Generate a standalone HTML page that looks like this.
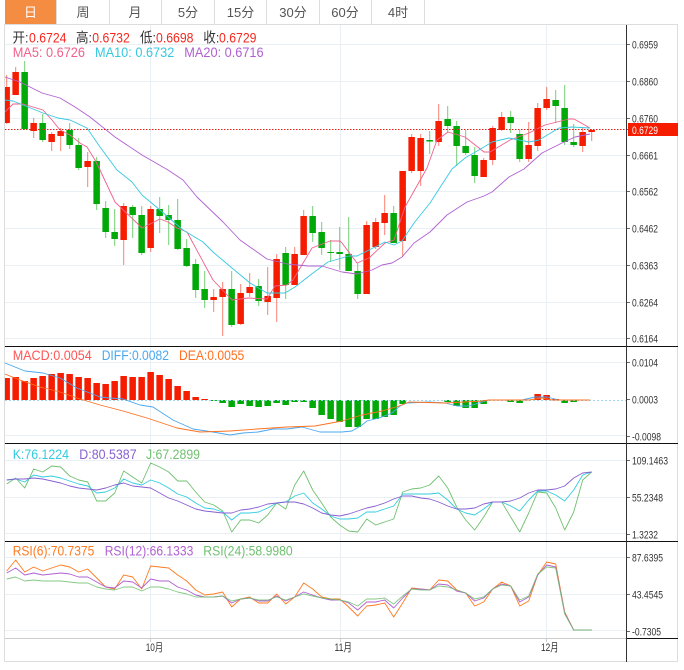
<!DOCTYPE html>
<html><head><meta charset="utf-8"><style>
html,body{margin:0;padding:0;background:#fff;width:684px;height:670px;overflow:hidden}
svg{display:block;font-family:"Liberation Sans","Noto Sans CJK SC",sans-serif}
.g{stroke:#e9eff3;stroke-width:1;fill:none}
.l{fill:none;stroke-width:.9;stroke-linejoin:round}
.a{font-size:11px;fill:#333}
.t{font-size:14px}
.tab{font-size:13px;fill:#555;text-anchor:middle}
</style></head><body>
<svg width="684" height="670" viewBox="0 0 684 670">
<defs><clipPath id="c"><rect x="5" y="25" width="621" height="613"/></clipPath></defs>
<rect x="5" y="0" width="52" height="24" fill="#f48d42"/>
<path d="M56.5 0V24M109.5 0V24M161.5 0V24M214.5 0V24M266.5 0V24M319.5 0V24M371.5 0V24M424.5 0V24" stroke="#ddd" fill="none"/>
<path d="M4 24.5H678M4.5 24V662M677.5 24V662M4 661.5H678" stroke="#ddd" fill="none"/>
<text x="30.5" y="17" class="tab" style="fill:#fff">日</text>
<text x="83" y="17" class="tab">周</text>
<text x="135" y="17" class="tab">月</text>
<text x="188" y="17" class="tab">5分</text>
<text x="240.5" y="17" class="tab">15分</text>
<text x="293" y="17" class="tab">30分</text>
<text x="345" y="17" class="tab">60分</text>
<text x="398" y="17" class="tab">4时</text>

<path class="g" d="M5 44.5H626M5 81.5H626M5 118.5H626M5 155.5H626M5 191.5H626M5 228.5H626M5 265.5H626M5 302.5H626M5 338.5H626M5 362.5H626M5 435.5H626M5 460.5H626M5 497.5H626M5 533.5H626M5 557.5H626M5 594.5H626M5 630.5H626M150.5 25V638M340.5 25V638M546.5 25V638"/>

<g clip-path="url(#c)">
<path stroke="#f51c00" stroke-opacity=".55" fill="none" d="M6.7 75V124M15.7 67V95M33.7 118V138M51.7 132V151M60.7 128V151M87.7 152V187M123.7 203V265M150.7 206V252M213.7 289V312M222.7 282V336M240.7 284V325M249.7 273V297M267.7 267V315M276.7 254V322M294.7 247V285M303.7 210V255M366.7 221V294M375.7 218V249M384.7 195V235M402.7 171V257M411.7 134V173M420.7 134V186M438.7 104V146M483.7 158V177M492.7 126V165M501.7 112V131M528.7 122V162M537.7 103V151M546.7 87V110M582.7 128V152M591.7 129V141"/>
<path stroke="#00a808" stroke-opacity=".55" fill="none" d="M24.7 61V130M42.7 114V142M69.7 123V149M78.7 138V170M96.7 157V210M105.7 201V238M114.7 209V246M132.7 205V238M141.7 206V255M159.7 197V233M168.7 205V245M177.7 199V250M186.7 239V267M195.7 259V298M204.7 271V308M231.7 271V327M258.7 279V306M285.7 247V299M312.7 206V242M321.7 222V255M330.7 240V262M339.7 227V270M348.7 217V271M357.7 263V299M393.7 206V243M429.7 131V154M447.7 106V133M456.7 121V166M465.7 130V155M474.7 147V183M510.7 111V133M519.7 130V162M555.7 90V123M564.7 85V145M573.7 124V147"/>
<path fill="#f51c00" d="M3.4 87h6.5V123h-6.5zM12.4 72h6.5V95h-6.5zM30.4 123h6.5V131h-6.5zM48.4 134h6.5V142h-6.5zM57.4 131h6.5V136h-6.5zM84.4 161h6.5V167h-6.5zM120.4 206h6.5V240h-6.5zM147.4 209h6.5V248h-6.5zM210.4 297h6.5V300h-6.5zM219.4 289h6.5V297h-6.5zM237.4 293h6.5V324h-6.5zM246.4 287h6.5V293h-6.5zM264.4 296h6.5V302h-6.5zM273.4 259h6.5V298h-6.5zM291.4 254h6.5V285h-6.5zM300.4 216h6.5V255h-6.5zM363.4 225h6.5V294h-6.5zM372.4 222h6.5V247h-6.5zM381.4 213h6.5V223h-6.5zM399.4 171h6.5V241h-6.5zM408.4 137h6.5V171h-6.5zM417.4 138h6.5V171h-6.5zM435.4 121h6.5V142h-6.5zM480.4 160h6.5V177h-6.5zM489.4 128h6.5V160h-6.5zM498.4 117h6.5V130h-6.5zM525.4 145h6.5V159h-6.5zM534.4 108h6.5V146h-6.5zM543.4 99h6.5V108h-6.5zM579.4 132h6.5V146h-6.5zM588.4 130h6.5V132h-6.5z"/>
<path fill="#00a808" d="M21.4 72h6.5V129h-6.5zM39.4 123h6.5V140h-6.5zM66.4 130h6.5V145h-6.5zM75.4 145h6.5V168h-6.5zM93.4 161h6.5V204h-6.5zM102.4 208h6.5V232h-6.5zM111.4 232h6.5V239h-6.5zM129.4 207h6.5V215h-6.5zM138.4 215h6.5V253h-6.5zM156.4 209h6.5V216h-6.5zM165.4 215h6.5V220h-6.5zM174.4 220h6.5V249h-6.5zM183.4 248h6.5V266h-6.5zM192.4 264h6.5V290h-6.5zM201.4 289h6.5V300h-6.5zM228.4 289h6.5V325h-6.5zM255.4 286h6.5V301h-6.5zM282.4 253h6.5V285h-6.5zM309.4 216h6.5V233h-6.5zM318.4 232h6.5V248h-6.5zM327.4 252h6.5V253h-6.5zM336.4 252h6.5V254h-6.5zM345.4 254h6.5V271h-6.5zM354.4 271h6.5V294h-6.5zM390.4 213h6.5V243h-6.5zM426.4 140h6.5V141.5h-6.5zM444.4 119h6.5V126h-6.5zM453.4 126h6.5V146h-6.5zM462.4 146h6.5V153h-6.5zM471.4 155h6.5V176h-6.5zM507.4 117h6.5V123h-6.5zM516.4 134h6.5V159h-6.5zM552.4 100h6.5V106h-6.5zM561.4 108h6.5V142h-6.5zM570.4 142h6.5V145h-6.5z"/>

<polyline class="l" stroke="#f0608c" points="5,112 13,104 23,104 33,107 43,110 52,120 60,130 70,135 80,143 87,147 95,160 100,170 115,202 142,228 160,219 168,222 177,228 187,232 213,280 232,300 248,298 267,299 275,286 287,285 293,280 312,248 330,241 340,241 342,243 357,263 369,258 385,243 394,240 405,207 427,168 437,140 448,132 465,137 484,152 490,152 510,140 529,133 545,125 569,119 574,119 590,128"/>
<polyline class="l" stroke="#38c8e0" points="5,100 13,101 23,105 43,113 58,118 70,120 87,128 100,147 117,170 132,182 142,195 160,210 183,230 203,242 213,252 232,268 250,283 267,293 285,293 295,287 313,273 328,262 342,258 349,256 357,256 375,247 385,242 394,245 402,241 414,223 430,203 452,169 465,158 484,147 492,142 509,138 519,140 529,142 539,140 559,128 572,127 590,128"/>
<polyline class="l" stroke="#b060d0" points="5,77 20,82 42,93 60,98 75,107 90,117 115,137 142,155 168,170 183,180 197,197 223,222 240,240 267,259 287,264 308,266 322,266 342,272 357,274 372,270 382,265 392,263 402,257 414,243 430,232 447,215 467,202 484,196 492,192 509,177 524,169 542,153 562,143 575,137 590,134"/>

<path fill="#f51c00" d="M3.4 378h6.5V400h-6.5zM12.4 377h6.5V400h-6.5zM21.4 381h6.5V400h-6.5zM30.4 378h6.5V400h-6.5zM39.4 376h6.5V400h-6.5zM48.4 374h6.5V400h-6.5zM57.4 373h6.5V400h-6.5zM66.4 374h6.5V400h-6.5zM75.4 377h6.5V400h-6.5zM84.4 378h6.5V400h-6.5zM93.4 383h6.5V400h-6.5zM102.4 384h6.5V400h-6.5zM111.4 381h6.5V400h-6.5zM120.4 376h6.5V400h-6.5zM129.4 377h6.5V400h-6.5zM138.4 377h6.5V400h-6.5zM147.4 372h6.5V400h-6.5zM156.4 375h6.5V400h-6.5zM165.4 379h6.5V400h-6.5zM174.4 386h6.5V400h-6.5zM183.4 391h6.5V400h-6.5zM192.4 397h6.5V400h-6.5zM201.4 399h6.5V400h-6.5zM534.4 394h6.5V400h-6.5zM543.4 395h6.5V400h-6.5zM552.4 399h6.5V400h-6.5z"/>
<path fill="#00a808" d="M210.4 400h6.5V401h-6.5zM219.4 400h6.5V403h-6.5zM228.4 400h6.5V407h-6.5zM237.4 400h6.5V404h-6.5zM246.4 400h6.5V406h-6.5zM255.4 400h6.5V407h-6.5zM264.4 400h6.5V406h-6.5zM273.4 400h6.5V403h-6.5zM282.4 400h6.5V405h-6.5zM291.4 400h6.5V402h-6.5zM300.4 400h6.5V402h-6.5zM309.4 400h6.5V408h-6.5zM318.4 400h6.5V415h-6.5zM327.4 400h6.5V419h-6.5zM336.4 400h6.5V422h-6.5zM345.4 400h6.5V427h-6.5zM354.4 400h6.5V427h-6.5zM363.4 400h6.5V419h-6.5zM372.4 400h6.5V419h-6.5zM381.4 400h6.5V417h-6.5zM390.4 400h6.5V415h-6.5zM399.4 400h6.5V404h-6.5zM444.4 400h6.5V402h-6.5zM453.4 400h6.5V406h-6.5zM462.4 400h6.5V408h-6.5zM471.4 400h6.5V408h-6.5zM480.4 400h6.5V404h-6.5zM507.4 400h6.5V402h-6.5zM516.4 400h6.5V403h-6.5zM561.4 400h6.5V403h-6.5zM570.4 400h6.5V402h-6.5z"/>
<path d="M5 400.5H626" stroke="#9fd8ee" stroke-dasharray="2 2" fill="none"/>
<polyline class="l" stroke="#4aa8f0" points="5,363 25,371 43,373 60,378 77,388 100,397 110,398 123,399 140,405 153,407 173,420 193,429 213,432 230,435 243,433 258,432 273,429 287,429 302,427 320,432 342,432 352,431 362,425 367,421 379,418 392,413 400,406 407,403 429,402 445,403 457,406 469,406 482,402 489,400 509,400 522,400 535,397 547,397 559,400 590,400"/>
<polyline class="l" stroke="#ff7020" points="5,374 20,380 40,387 60,392 80,399 100,405 123,411 147,418 177,428 200,432 230,431 257,429 287,427 315,426 342,421 362,415 382,411 399,406 409,402 445,403 482,401 489,400 529,400 542,398 552,400 590,400"/>

<g transform="translate(-.3,0)">
<polyline class="l" stroke="#70c070" points="7,484 16,478 25,488 34,469 43,472 52,466 61,467 70,476 79,480 88,482 97,501 106,501 115,493 124,471 133,477 142,483 151,463 160,467 169,472 178,481 187,481 196,492 205,502 214,505 223,511 232,532 241,520 250,520 259,523 268,515 277,503 286,509 295,485 304,471 313,490 322,503 331,517 340,525 349,531 358,532 367,519 376,525 385,522 394,519 403,492 412,489 421,488 430,485 439,476 448,488 457,507 466,520 475,530 484,517 493,502 502,502 511,517 520,532 529,513 538,492 547,493 556,508 565,530 574,512 583,480 592,472"/>
<polyline class="l" stroke="#33cce0" points="7,480 16,479 25,482 34,475 43,477 52,476 61,478 70,481 79,484 88,486 97,493 106,492 115,488 124,479 133,483 142,485 151,480 160,483 169,488 178,494 187,497 196,503 205,508 214,509 223,512 232,520 241,513 250,513 259,512 268,508 277,503 286,502 295,496 304,493 313,503 322,509 331,516 340,519 349,519 358,518 367,512 376,512 385,509 394,506 403,494 412,494 421,494 430,494 439,493 448,500 457,509 466,513 475,515 484,509 493,502 502,502 511,506 520,511 529,500 538,491 547,491 556,495 565,501 574,490 583,475 592,472"/>
<polyline class="l" stroke="#8860d0" points="7,480 16,479 25,479 34,478 43,479 52,481 61,483 70,486 79,488 88,489 97,490 106,488 115,485 124,483 133,486 142,487 151,488 160,493 169,498 178,501 187,505 196,509 205,511 214,512 223,513 232,513 241,510 250,509 259,507 268,504 277,503 286,502 295,502 304,504 313,508 322,513 331,515 340,516 349,514 358,511 367,508 376,506 385,503 394,499 403,496 412,496 421,498 430,499 439,502 448,506 457,509 466,509 475,508 484,504 493,502 502,502 511,501 520,498 529,493 538,490 547,490 556,489 565,486 574,478 583,473 592,472"/>

<polyline class="l" stroke="#ff7a20" points="7,571 16,560 25,572 34,567 43,571 52,568 61,565 70,567 79,572 88,569 97,578 106,587 115,589 124,575 133,577 142,589 151,566 160,567 169,568 178,575 187,581 196,590 205,595 214,594 223,592 232,607 241,599 250,597 259,603 268,603 277,594 286,604 295,597 304,583 313,589 322,597 331,599 340,599 349,607 358,616 367,606 376,605 385,603 394,617 403,603 412,588 421,589 430,590 439,580 448,581 457,590 466,593 475,606 484,602 493,589 502,582 511,586 520,606 529,601 538,575 547,562 556,564 565,612 574,630 583,630 592,630"/>
<polyline class="l" stroke="#b060d0" points="7,573 16,568 25,575 34,573 43,575 52,574 61,573 70,574 79,577 88,577 97,582 106,587 115,588 124,581 133,582 142,588 151,579 160,581 169,581 178,587 187,590 196,595 205,597 214,597 223,596 232,603 241,599 250,598 259,601 268,601 277,596 286,601 295,597 304,592 313,595 322,598 331,600 340,600 349,603 358,610 367,602 376,602 385,600 394,608 403,598 412,589 421,589 430,590 439,584 448,585 457,591 466,593 475,601 484,598 493,589 502,584 511,586 520,602 529,597 538,575 547,565 556,567 565,613 574,630 583,630 592,630"/>
<polyline class="l" stroke="#70c070" stroke-opacity=".85" points="7,579 16,577 25,581 34,580 43,581 52,581 61,581 70,582 79,583 88,583 97,587 106,589 115,590 124,587 133,587 142,591 151,587 160,587 169,589 178,592 187,594 196,597 205,597 214,597 223,596 232,601 241,599 250,598 259,600 268,600 277,597 286,600 295,597 304,594 313,596 322,598 331,599 340,600 349,602 358,606 367,599 376,599 385,598 394,604 403,596 412,589 421,590 430,590 439,586 448,587 457,590 466,593 475,599 484,597 493,589 502,585 511,586 520,600 529,596 538,574 547,567 556,568 565,614 574,630 583,630 592,630"/>
</g>
</g>
<path d="M5 129.5H626" stroke="#e0201a" stroke-dasharray="1.5 1.5" fill="none"/>
<path d="M626 129.5H628" stroke="#e0201a" fill="none"/>

<path d="M5 346.5H678M5 443.5H678M5 541.5H678M626 638.5H678" stroke="#111" fill="none"/>
<path d="M5 638.5H626" stroke="#ccc" fill="none"/>
<path d="M626.5 25V662" stroke="#333" fill="none"/>
<path d="M150.5 638V642M340.5 638V642M546.5 638V642" stroke="#ccc" fill="none"/>
<path d="M627 44.5H630M627 81.5H630M627 118.5H630M627 155.5H630M627 191.5H630M627 228.5H630M627 265.5H630M627 302.5H630M627 338.5H630M627 362.5H630M627 399.5H630M627 436.5H630M627 460.5H630M627 497.5H630M627 534.5H630M627 557.5H630M627 594.5H630M627 631.5H630" stroke="#666" fill="none"/>

<text x="12.5" y="42.5" class="t" fill="#333" textLength="16" lengthAdjust="spacingAndGlyphs">开:</text><text x="29" y="42.5" class="t" fill="#f5281e" textLength="37.5" lengthAdjust="spacingAndGlyphs">0.6724</text>
<text x="76" y="42.5" class="t" fill="#333" textLength="16" lengthAdjust="spacingAndGlyphs">高:</text><text x="92.3" y="42.5" class="t" fill="#f5281e" textLength="37.5" lengthAdjust="spacingAndGlyphs">0.6732</text>
<text x="140" y="42.5" class="t" fill="#333" textLength="16" lengthAdjust="spacingAndGlyphs">低:</text><text x="156" y="42.5" class="t" fill="#f5281e" textLength="37.5" lengthAdjust="spacingAndGlyphs">0.6698</text>
<text x="203.3" y="42.5" class="t" fill="#333" textLength="16" lengthAdjust="spacingAndGlyphs">收:</text><text x="219" y="42.5" class="t" fill="#f5281e" textLength="37.5" lengthAdjust="spacingAndGlyphs">0.6729</text>
<text x="12.7" y="57" class="t" fill="#f0608c" textLength="72.3" lengthAdjust="spacingAndGlyphs">MA5: 0.6726</text>
<text x="95" y="57" class="t" fill="#38c8e0" textLength="79.3" lengthAdjust="spacingAndGlyphs">MA10: 0.6732</text>
<text x="184.3" y="57" class="t" fill="#b060d0" textLength="79.3" lengthAdjust="spacingAndGlyphs">MA20: 0.6716</text>
<text x="12.7" y="360" class="t" fill="#f55" textLength="79" lengthAdjust="spacingAndGlyphs">MACD:0.0054</text>
<text x="101.7" y="360" class="t" fill="#4aa8f0" textLength="67.3" lengthAdjust="spacingAndGlyphs">DIFF:0.0082</text>
<text x="179" y="360" class="t" fill="#ff7020" textLength="65.3" lengthAdjust="spacingAndGlyphs">DEA:0.0055</text>
<text x="12.7" y="459" class="t" fill="#33cce0" textLength="56.3" lengthAdjust="spacingAndGlyphs">K:76.1224</text>
<text x="79.3" y="459" class="t" fill="#8860d0" textLength="57.3" lengthAdjust="spacingAndGlyphs">D:80.5387</text>
<text x="146" y="459" class="t" fill="#70c070" textLength="54" lengthAdjust="spacingAndGlyphs">J:67.2899</text>
<text x="12.7" y="555.5" class="t" fill="#ff7a20" textLength="81.6" lengthAdjust="spacingAndGlyphs">RSI(6):70.7375</text>
<text x="104.7" y="555.5" class="t" fill="#b060d0" textLength="88.6" lengthAdjust="spacingAndGlyphs">RSI(12):66.1333</text>
<text x="203.3" y="555.5" class="t" fill="#70c070" textLength="89.4" lengthAdjust="spacingAndGlyphs">RSI(24):58.9980</text>

<g class="a">
<text x="632" y="48.5" textLength="26" lengthAdjust="spacingAndGlyphs">0.6959</text>
<text x="632" y="85.5" textLength="26" lengthAdjust="spacingAndGlyphs">0.6860</text>
<text x="632" y="122.5" textLength="26" lengthAdjust="spacingAndGlyphs">0.6760</text>
<text x="632" y="159.5" textLength="26" lengthAdjust="spacingAndGlyphs">0.6661</text>
<text x="632" y="195.5" textLength="26" lengthAdjust="spacingAndGlyphs">0.6562</text>
<text x="632" y="232.5" textLength="26" lengthAdjust="spacingAndGlyphs">0.6462</text>
<text x="632" y="269.5" textLength="26" lengthAdjust="spacingAndGlyphs">0.6363</text>
<text x="632" y="306.5" textLength="26" lengthAdjust="spacingAndGlyphs">0.6264</text>
<text x="632" y="342.5" textLength="26" lengthAdjust="spacingAndGlyphs">0.6164</text>
<text x="632" y="366.5" textLength="26" lengthAdjust="spacingAndGlyphs">0.0104</text>
<text x="632" y="403.5" textLength="26" lengthAdjust="spacingAndGlyphs">0.0003</text>
<text x="632" y="440.5" textLength="29" lengthAdjust="spacingAndGlyphs">-0.0098</text>
<text x="632" y="464.5" textLength="36" lengthAdjust="spacingAndGlyphs">109.1463</text>
<text x="632" y="501.5" textLength="31" lengthAdjust="spacingAndGlyphs">55.2348</text>
<text x="632" y="538.5" textLength="26" lengthAdjust="spacingAndGlyphs">1.3232</text>
<text x="632" y="561.5" textLength="31" lengthAdjust="spacingAndGlyphs">87.6395</text>
<text x="632" y="598.5" textLength="31" lengthAdjust="spacingAndGlyphs">43.4545</text>
<text x="632" y="635.5" textLength="29" lengthAdjust="spacingAndGlyphs">-0.7305</text>
<text x="145.7" y="651" textLength="17.5" lengthAdjust="spacingAndGlyphs">10月</text>
<text x="334.5" y="651" textLength="17.5" lengthAdjust="spacingAndGlyphs">11月</text>
<text x="541" y="651" textLength="17.5" lengthAdjust="spacingAndGlyphs">12月</text>
</g>
<rect x="628" y="123" width="50" height="13" fill="#f51c00"/>
<text x="632" y="134" font-size="11" fill="#fff" textLength="26" lengthAdjust="spacingAndGlyphs">0.6729</text>
</svg>
</body></html>
